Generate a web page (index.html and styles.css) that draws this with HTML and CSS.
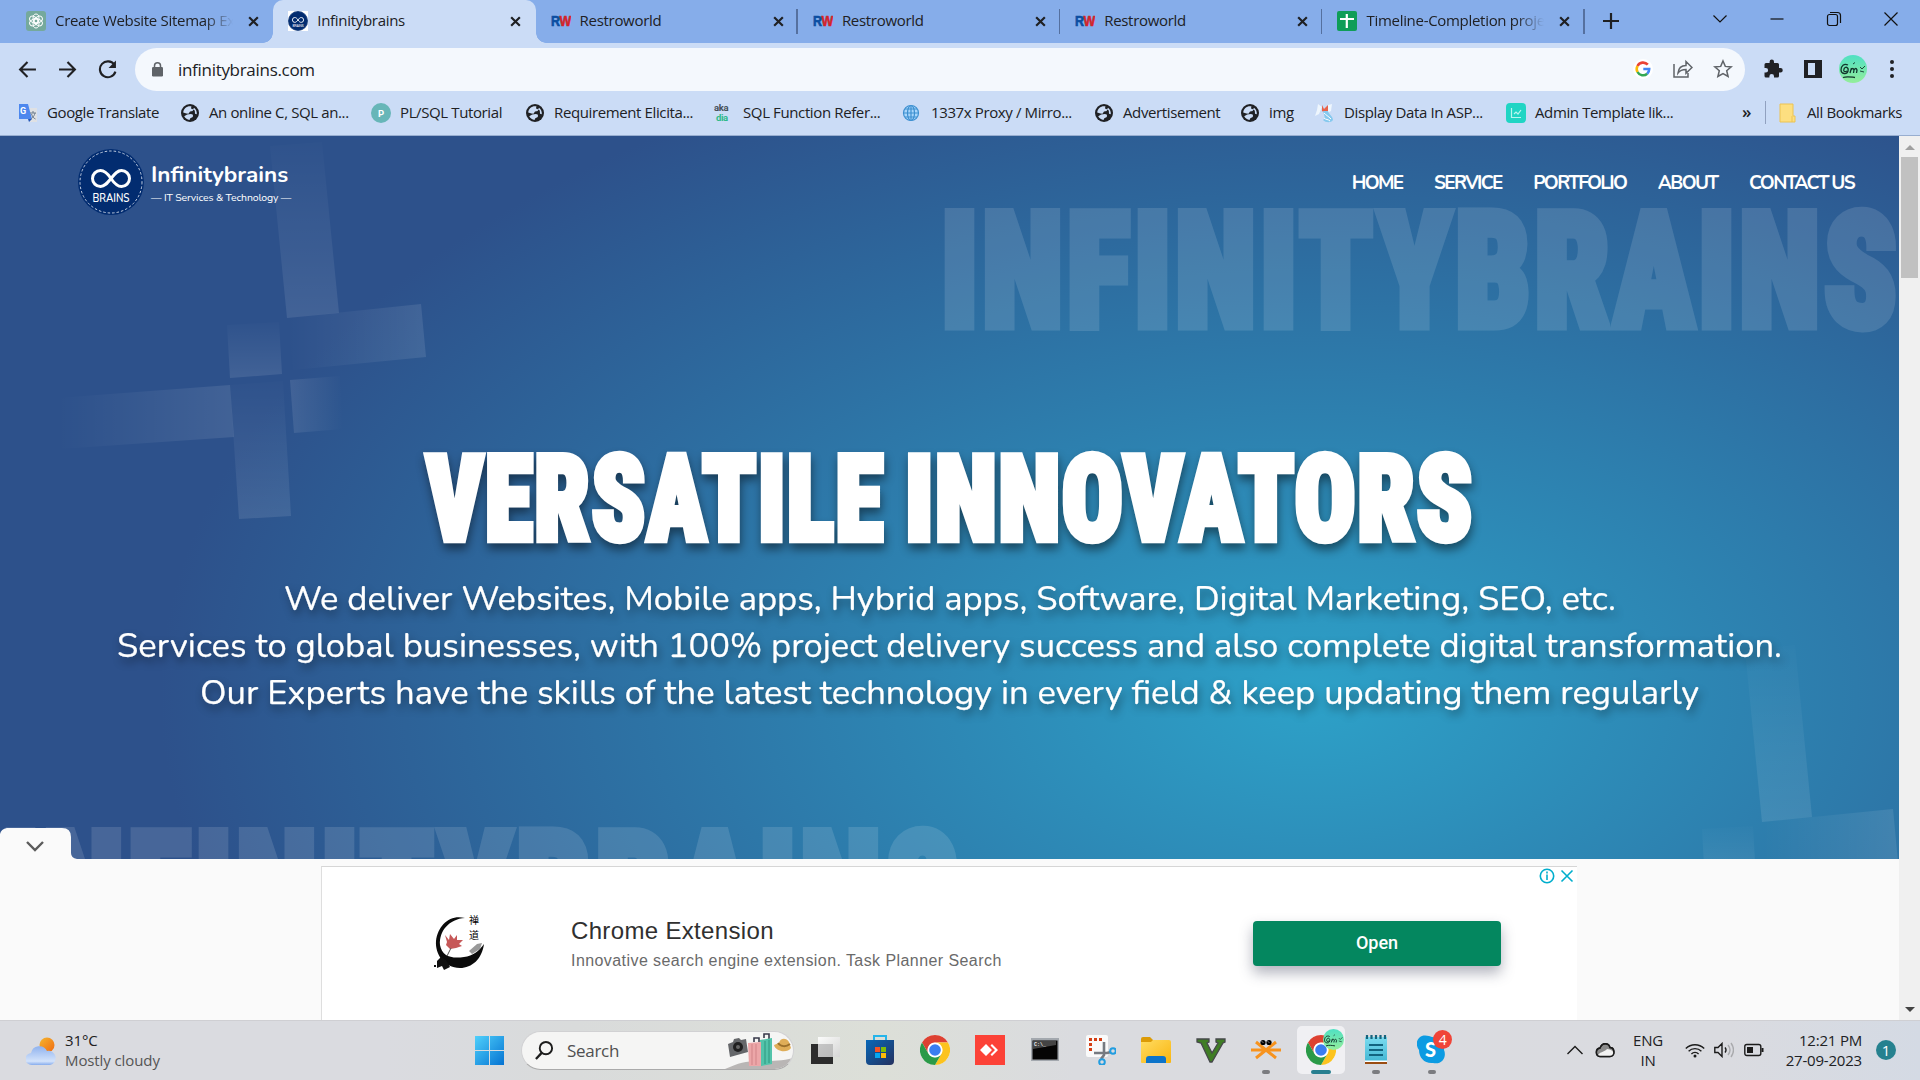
FILE: index.html
```html
<!DOCTYPE html>
<html lang="en">
<head>
<meta charset="utf-8">
<title>Infinitybrains</title>
<link rel="stylesheet" href="styles.css">
</head>
<body>
<svg width="0" height="0" class="defs" aria-hidden="true">
  <defs>
    <symbol id="close" viewBox="0 0 12 12"><path d="M2 2L10 10M10 2L2 10" stroke="#1f2023" stroke-width="2" fill="none"/></symbol>
    <symbol id="globe" viewBox="0 0 20 20"><circle cx="10" cy="10" r="9" fill="#202124"/><path d="M10 3.2c-3.600 0-6.500 2.600-6.800 6.300l3.300 1 2 .2 1.500-2.200 2.800-.4.200-1.800-2-.9.400-2.200zM4.200 13.200c1.200 2.200 3.200 3.500 5.300 3.700l.8-1.700 2.500-1.200.2-2.200-2-.7-3.800.4zM14 4.800l-1 1.800 1.800 1 .2 3.200 1.800.4c.2-2.700-.8-4.900-2.800-6.400z" fill="#cbdcf6"/></symbol>
    <symbol id="rw" viewBox="0 0 20 20"><text x="0" y="15" textLength="20" lengthAdjust="spacingAndGlyphs" font-family="Liberation Sans" font-weight="700" font-size="14" stroke-width=".6"><tspan fill="#0b4ea2" stroke="#0b4ea2">R</tspan><tspan fill="#d3232a" stroke="#d3232a">W</tspan></text></symbol>
    <symbol id="brand" viewBox="0 0 66 66"><circle cx="33" cy="33" r="33" fill="#022c70"/><circle cx="33" cy="33" r="31" fill="none" stroke="#c4cfe2" stroke-width="1" stroke-dasharray="2.500 2"/><path d="M33 29.500c-4-6-7-8-10.500-8a8 8 0 0 0 0 16c4 0 6.500-3 10.500-8s6.500-8 10.500-8a8 8 0 0 1 0 16c-3.500 0-6.500-2-10.500-8z" fill="none" stroke="#fff" stroke-width="3"/><text x="14.500" y="53" textLength="37" lengthAdjust="spacingAndGlyphs" font-family="Nunito, Lato" font-weight="600" font-size="11" fill="#fff">BRAINS</text></symbol>
    <symbol id="chrome" viewBox="0 0 30 30"><circle cx="15" cy="15" r="15" fill="#fff"/><path d="M15 0a15 15 0 0 1 13 7.500H15A7.500 7.500 0 0 0 8.500 18.750L2 7.500A15 15 0 0 1 15 0z" fill="#dd4132"/><path d="M28 7.500A15 15 0 0 1 15 30l6.500-11.250A7.500 7.500 0 0 0 15 7.500z" fill="#fcc31e"/><path d="M2 7.500A15 15 0 0 0 15 30l6.500-11.250a7.500 7.500 0 0 1-13 0z" fill="#2a9a48"/><circle cx="15" cy="15" r="7.200" fill="#fff"/><circle cx="15" cy="15" r="5.800" fill="#3a7df0"/></symbol>
    <symbol id="avatar" viewBox="0 0 28 28"><circle cx="14" cy="14" r="14" fill="url(#mint)"/><g fill="none" stroke="#12352c" stroke-width="1.300"><path d="M9 10c-4-2-7 1-7 5s6 5 7 1-3-5-4-2 1 3 3 2M11 18l1.500-5M12 15q2-3 3 0l-.5 3M15 15q2-3 3 0l-.5 3"/><path d="M4 22.500c4-1.500 8-.5 12 0" /><path d="M14 9l2-1.500M21 12l2 2 3-3M21 16l4 1" stroke-width=".9"/></g></symbol>
    <linearGradient id="mint" x2="0" y2="1"><stop stop-color="#4fe0c3"/><stop offset="1" stop-color="#94ee9b"/></linearGradient>
    <linearGradient id="up" x1="0" y1="1" x2="0" y2="0"><stop stop-color="#fff" stop-opacity=".1"/><stop offset="1" stop-color="#fff" stop-opacity="0"/></linearGradient>
    <linearGradient id="right"><stop stop-color="#fff" stop-opacity="0"/><stop offset="1" stop-color="#fff" stop-opacity=".1"/></linearGradient>
    <linearGradient id="down" x2="0" y2="1"><stop stop-color="#fff" stop-opacity=".01"/><stop offset="1" stop-color="#fff" stop-opacity=".1"/></linearGradient>
    <linearGradient id="left"><stop stop-color="#fff" stop-opacity=".1"/><stop offset="1" stop-color="#fff" stop-opacity="0"/></linearGradient>
    <linearGradient id="win" x2="1" y2="1"><stop stop-color="#4fd0fb"/><stop offset="1" stop-color="#0573d2"/></linearGradient>
    <linearGradient id="sun" x2="1" y2="1"><stop stop-color="#f5b62e"/><stop offset="1" stop-color="#ef6a13"/></linearGradient>
    <linearGradient id="cloud" x2="0" y2="1"><stop stop-color="#8fb2ee"/><stop offset=".8" stop-color="#d3e3fb"/><stop offset="1" stop-color="#86aced"/></linearGradient>
    <linearGradient id="fold" x2="1" y2="1"><stop stop-color="#ffdc62"/><stop offset="1" stop-color="#f9b50f"/></linearGradient>
    <linearGradient id="store" x2="1" y2="1"><stop stop-color="#0768b8"/><stop offset="1" stop-color="#25315f"/></linearGradient>
    <linearGradient id="glass" x2="1" y2="1"><stop stop-color="#fff"/><stop offset="1" stop-color="#d5d5d5"/></linearGradient>
    <linearGradient id="note" x2="0" y2="1"><stop stop-color="#7bdcf0"/><stop offset="1" stop-color="#3eb3d1"/></linearGradient>
  </defs>
</svg>

<header class="tabstrip">
  <div class="tabs">
    <div class="tab">
      <svg class="fav" viewBox="0 0 20 20"><rect width="20" height="20" rx="3" fill="#75a99c"/><g fill="none" stroke="#fff" stroke-width="1"><ellipse cx="10" cy="7.500" rx="3" ry="4.500"/><ellipse cx="10" cy="7.500" rx="3" ry="4.500" transform="rotate(60 10 10)"/><ellipse cx="10" cy="7.500" rx="3" ry="4.500" transform="rotate(120 10 10)"/><ellipse cx="10" cy="7.500" rx="3" ry="4.500" transform="rotate(180 10 10)"/><ellipse cx="10" cy="7.500" rx="3" ry="4.500" transform="rotate(240 10 10)"/><ellipse cx="10" cy="7.500" rx="3" ry="4.500" transform="rotate(300 10 10)"/></g></svg>
      <span class="title fade">Create Website Sitemap Ex</span><svg class="x"><use href="#close"/></svg>
    </div>
    <div class="tab active">
      <svg class="fav" viewBox="0 0 20 20"><rect width="20" height="20" fill="#fff"/><use href="#brand" width="20" height="20"/></svg>
      <span class="title">Infinitybrains</span><svg class="x"><use href="#close"/></svg>
    </div>
    <div class="tab div"><svg class="fav"><use href="#rw"/></svg><span class="title">Restroworld</span><svg class="x"><use href="#close"/></svg></div>
    <div class="tab div"><svg class="fav"><use href="#rw"/></svg><span class="title">Restroworld</span><svg class="x"><use href="#close"/></svg></div>
    <div class="tab div"><svg class="fav"><use href="#rw"/></svg><span class="title">Restroworld</span><svg class="x"><use href="#close"/></svg></div>
    <div class="tab div">
      <svg class="fav" viewBox="0 0 20 20"><rect width="20" height="20" rx="2" fill="#0f9d58"/><path d="M9.800 3v14M3 8h14" stroke="#fff" stroke-width="2.200"/></svg>
      <span class="title fade">Timeline-Completion proje</span><svg class="x"><use href="#close"/></svg>
    </div>
  </div>
  <svg class="plus" viewBox="0 0 16 16"><path d="M8 0v16M0 8h16" stroke="#1f2023" stroke-width="2.200"/></svg>
  <div class="controls">
    <svg viewBox="0 0 16 16"><path d="M1.500 4.500L8 11l6.500-6.500" /></svg>
    <svg viewBox="0 0 16 16"><path d="M1.500 8h13"/></svg>
    <svg viewBox="0 0 16 16"><rect x="1.500" y="3.500" width="10" height="11" rx="2"/><path d="M4 1.500h7.500a3 3 0 0 1 3 3V12"/></svg>
    <svg viewBox="0 0 16 16"><path d="M1.500 1.500l13 13M14.500 1.500l-13 13"/></svg>
  </div>
</header>

<div class="toolbar">
  <svg class="nav-i" viewBox="0 0 18 18"><path d="M17 9H2M9 2L2 9l7 7"/></svg>
  <svg class="nav-i" viewBox="0 0 18 18"><path d="M1 9h15M9 2l7 7-7 7"/></svg>
  <svg class="nav-i" viewBox="0 0 18 18"><path d="M15.500 4.500A7.500 7.500 0 1 0 16.500 11"/><path d="M17 .5V7.500H10z" fill="#202124" stroke="none"/></svg>
  <div class="omnibox">
    <svg class="lock" viewBox="0 0 11 15"><rect y="5" width="11" height="9.500" rx="1.200" fill="#5f6368"/><path d="M2.500 6V3.800a3 3 0 0 1 6 0V6" fill="none" stroke="#5f6368" stroke-width="1.500"/></svg>
    <span class="url">infinitybrains.com</span>
    <svg class="oi" viewBox="0 0 20 20"><circle cx="10" cy="10" r="10" fill="#fff"/><g fill="none" stroke-width="2.600"><path d="M14.800 5.700A6.300 6.300 0 0 0 4.500 7" stroke="#ea4335"/><path d="M4.500 7a6.300 6.300 0 0 0 0 6" stroke="#fbbc05"/><path d="M4.500 13a6.300 6.300 0 0 0 9.700 1.700" stroke="#34a853"/><path d="M14.200 14.700A6.200 6.200 0 0 0 16.200 10H10.300" stroke="#4285f4"/></g></svg>
    <svg class="oi line" viewBox="0 0 20 20"><path d="M1 5v13h14v-4M5 14c.5-5 3-7.500 8-7.500V2.500l6 6-6 5.800v-3.800c-3.500 0-6 .8-8 3.500z"/></svg>
    <svg class="oi line" viewBox="0 0 20 20"><path d="M10 2l2.300 5.400 5.900.5-4.500 3.900 1.400 5.700L10 14.500l-5.100 3 1.400-5.700L1.800 7.900l5.900-.5z"/></svg>
  </div>
  <svg class="ext" viewBox="0 0 20 20"><path d="M17.500 9H16V5.500A1.500 1.500 0 0 0 14.500 4H11V2.700a2.200 2.200 0 0 0-4.400 0V4H3a1.500 1.500 0 0 0-1.500 1.500V9h1.300a2.300 2.300 0 0 1 0 4.600H1.500v3.500A1.500 1.500 0 0 0 3 18.600h3.400v-1.300a2.300 2.300 0 0 1 4.600 0v1.300h3.500a1.500 1.500 0 0 0 1.500-1.500v-3.600h1.500a2.200 2.200 0 0 0 0-4.500z" fill="#202124"/></svg>
  <svg class="ext" viewBox="0 0 20 20"><path d="M1 1h18v18H1z" fill="#202124"/><path d="M5 4h7v12H5z" fill="#cbdcf6"/></svg>
  <svg class="avatar"><use href="#avatar"/></svg>
  <svg class="ext" viewBox="0 0 20 20"><g fill="#202124"><circle cx="10" cy="3" r="2"/><circle cx="10" cy="10" r="2"/><circle cx="10" cy="17" r="2"/></g></svg>
</div>

<nav class="bookmarks">
  <a><svg viewBox="0 0 20 20"><path d="M8 5h11v14H12z" fill="#dfe1e4"/><path d="M1 1h9l4 15H1z" fill="#4c87ee"/><path d="M10 16h4l-3 3z" fill="#2457b8"/><text x="2" y="11" font-family="Roboto" font-weight="700" font-size="9" fill="#fff">G</text><path d="M12 10h6M15 8v2M17 10c-1 4-3 5-4 6M13.500 11c1 3 2 4 4 5" stroke="#6d7c8c" fill="none"/></svg>Google Translate</a>
  <a><svg><use href="#globe"/></svg>An online C, SQL an...</a>
  <a><svg viewBox="0 0 20 20"><circle cx="10" cy="10" r="10" fill="#67b6b8"/><text x="7" y="13.500" font-family="Roboto" font-weight="700" font-size="9.500" fill="#fff">P</text></svg>PL/SQL Tutorial</a>
  <a><svg><use href="#globe"/></svg>Requirement Elicita...</a>
  <a><svg viewBox="0 0 20 20"><text x="0" y="8" font-family="Roboto" font-weight="700" font-size="9.500" fill="#46505a">aka</text><text x="2" y="18" font-family="Roboto" font-weight="700" font-size="9.500" fill="#2cb989">dia</text></svg>SQL Function Refer...</a>
  <a><svg viewBox="0 0 20 20"><g fill="#a9d6fb" stroke="#3d8fd0" stroke-width="1.200"><circle cx="9" cy="10" r="7.500"/><ellipse cx="9" cy="10" rx="3.500" ry="7.500"/><path d="M9 2.500v15M1.500 10h15M3 6h12M3 14h12"/></g></svg>1337x Proxy / Mirro...</a>
  <a><svg><use href="#globe"/></svg>Advertisement</a>
  <a><svg><use href="#globe"/></svg>img</a>
  <a><svg viewBox="0 0 20 20"><path d="M3 1l4 3-3 7-4 2 2-6zM13 2l4-1-1 7-4 2z" fill="#eef6fd"/><path d="M7 2l2 4 4-4v6l-3 2-3-2z" fill="#e8624a"/><path d="M8 8h5c1 4 5 5 5 9-2 3-7 3-10 0 3-2 1-5 0-9z" fill="#86c9ee"/><path d="M9 10c2 2 4 3 7 6M9 15c2 2 4 1 6 3" stroke="#fff" fill="none"/></svg>Display Data In ASP...</a>
  <a><svg viewBox="0 0 20 20"><rect width="20" height="20" rx="4" fill="#20d5c4"/><path d="M5.500 5v9.500H15M8 11l2-2 2 2 3-4" stroke="#b9f6ef" stroke-width="1.200" fill="none"/></svg>Admin Template lik...</a>
  <b>»</b>
  <a class="all"><svg viewBox="0 0 20 20"><path d="M2 1h13v12h2v6H2z" fill="#fddf80" stroke="#ecc352"/><path d="M14 13v6" stroke="#ecc352"/></svg>All Bookmarks</a>
</nav>

<main class="viewport">
  <div class="page">
    <section class="hero">
      <svg class="art" viewBox="0 136 1899 723">
        <g fill="url(#down)">
          <path d="M270 146L322 142L339 313L287 318z"/>
          <path d="M227 325L279 322L282 374L230 378z"/>
          <path d="M230 385L283 381L291 516L239 519z"/>
          <path d="M1745 650L1795 645L1812 817L1762 822z"/>
          <path d="M1702 829L1753 826L1756 880L1705 884z"/>
        </g>
        <g fill="url(#right)">
          <path d="M287 318L421 304L426 357L293 370z"/>
          <path d="M57 398L230 385L234 437L60 449z"/>
          <path d="M1762 822L1893 809L1898 862L1766 876z"/>
        </g>
        <path d="M290 380L340 376L343 429L294 433z" fill="url(#left)"/>
        <g class="mark">
          <text x="941" y="326" textLength="960" lengthAdjust="spacingAndGlyphs">INFINITYBRAINS</text>
          <text x="2" y="945" textLength="960" lengthAdjust="spacingAndGlyphs">INFINITYBRAINS</text>
        </g>
      </svg>
      <div class="bar">
        <div class="logo">
          <svg class="badge"><use href="#brand"/></svg>
          <div class="words"><strong>Infinitybrains</strong><small>— IT Services &amp; Technology —</small></div>
        </div>
        <div class="menu"><a>HOME</a><a>SERVICE</a><a>PORTFOLIO</a><a>ABOUT</a><a>CONTACT US</a></div>
      </div>
      <svg class="copy" viewBox="0 430 1899 300">
        <g class="big">
          <text x="426" y="540" textLength="459" lengthAdjust="spacingAndGlyphs">VERSATILE</text>
          <text x="905" y="540" textLength="569" lengthAdjust="spacingAndGlyphs">INNOVATORS</text>
        </g>
        <g class="para">
          <text x="284" y="610" textLength="1332" lengthAdjust="spacingAndGlyphs">We deliver Websites, Mobile apps, Hybrid apps, Software, Digital Marketing, SEO, etc.</text>
          <text x="117" y="657" textLength="1665" lengthAdjust="spacingAndGlyphs">Services to global businesses, with 100% project delivery success and also complete digital transformation.</text>
          <text x="200" y="704" textLength="1499" lengthAdjust="spacingAndGlyphs">Our Experts have the skills of the latest technology in every field &amp; keep updating them regularly</text>
        </g>
      </svg>
      <svg class="toggle" viewBox="0 0 77 31"><path d="M0 31V6Q1 1 7 0H62Q71 0 71 9V25Q71 30 77 31z" fill="#fafafa"/><path d="M27 14l8 8 8-8" fill="none" stroke="#5b5b5b" stroke-width="2.400"/></svg>
    </section>
    <section class="adwrap">
      <div class="ad">
        <svg class="zen" viewBox="0 0 52 58"><path d="M32 5C17 1 5 12 3 28c-1 13 8 27 24 27 12 0 22-9 24-24-5 7-11 12-20 13-13 2-22-1-24-12C6 18 16 6 32 5z" fill="#0b0b0b"/><path d="M4 48l4-4 5 3 4 7-6 3-2-4-5 2zM1 52h2v2H1z" fill="#111"/><path d="M36 38l8-7 5-1-2 6-8 5z" fill="#999"/><path d="M12 22l4 5 1-6 4 5 3-4 0 5 6 0-4 4 3 2-6 2-6 1-4-4 1-3z" fill="#c65858"/><path d="M18 35l-4 8" stroke="#555"/><text x="36" y="11" font-family="Noto Sans CJK SC" font-size="10">禅</text><text x="36" y="26" font-family="Noto Sans CJK SC" font-size="10">道</text></svg>
        <div class="adtext"><h2>Chrome Extension</h2><p>Innovative search engine extension. Task Planner Search</p></div>
        <a class="open">Open</a>
        <svg class="choices" viewBox="0 0 36 16"><g fill="none" stroke="#00aecd" stroke-width="1.600"><circle cx="8" cy="8" r="6.700"/><path d="M8 6.500v5.500M8 3.500v2M22.500 2.500l11 11M33.500 2.500l-11 11"/></g></svg>
      </div>
    </section>
  </div>
  <div class="scroll"><i class="up"></i><div class="thumb"></div><i class="down"></i></div>
</main>

<footer class="taskbar">
  <div class="weather">
    <svg viewBox="0 0 30 30"><circle cx="21" cy="8" r="7.500" fill="url(#sun)"/><path d="M6 28a6 6 0 0 1-1-12 8.500 8.500 0 0 1 16-2A7 7 0 0 1 24 28z" fill="url(#cloud)"/></svg>
    <div><b>31°C</b><span>Mostly cloudy</span></div>
  </div>
  <svg class="winlogo" viewBox="0 0 29 29"><path d="M0 0h14v14H0zM15 0h14v14H15zM0 15h14v14H0zM15 15h14v14H15z" fill="url(#win)"/></svg>
  <div class="search">
    <svg class="glass" viewBox="0 0 20 20"><circle cx="11.500" cy="7.500" r="6.500" fill="none" stroke="#1d1d1d" stroke-width="2"/><path d="M7 12.500L1 19" stroke="#1d1d1d" stroke-width="2.400"/></svg>
    <span>Search</span>
    <svg class="trip" viewBox="0 0 68 36"><path d="M0 36c14-6 20-8 34-8s22 0 34-3c-1 6-5 11-14 11z" fill="#b9b6b5"/><path d="M3 11l5-2 1-3 5-1 2 2 5-1 2 13-18 5z" fill="#65676a"/><circle cx="13" cy="14" r="5" fill="#202020"/><circle cx="13" cy="14" r="2" fill="#666"/><path d="M29 9V5h5v4M39 5V1h5v5" fill="none" stroke="#38394a" stroke-width="1.600"/><path d="M35 7l12-2v26l-11 2z" fill="#52c3aa"/><path d="M23 10l13-1v24l-12 0z" fill="#eca6a8"/><path d="M27 11v21M31 11v21" stroke="#d18488"/><path d="M40 8v23M44 7v23" stroke="#2e967f"/><path d="M49 12c1 6 13 9 17 3l-2-6c-3-5-9-4-10 1z" fill="#dfad58"/><path d="M53 10c3 4 8 4 12 1" stroke="#9c702b" stroke-width="2" fill="none"/></svg>
  </div>
  <div class="apps">
    <a><svg viewBox="0 0 30 30"><path d="M1 9h22v20H1z" fill="#2c2c2c"/><path d="M8 2h22v20H8z" fill="url(#glass)" opacity=".9"/><path d="M8 9h15v13H8z" fill="#aaa" opacity=".5"/></svg></a>
    <a><svg viewBox="0 0 30 30"><path d="M9 6V1h12v5" fill="none" stroke="#25b5ea" stroke-width="2"/><path d="M1 5h28v21a4 4 0 0 1-4 4H5a4 4 0 0 1-4-4z" fill="url(#store)"/><path d="M10 12h5v5h-5z" fill="#f35325"/><path d="M16 12h5v5h-5z" fill="#81bc06"/><path d="M10 18h5v5h-5z" fill="#05a6f0"/><path d="M16 18h5v5h-5z" fill="#ffba08"/></svg></a>
    <a><svg><use href="#chrome"/></svg></a>
    <a><svg viewBox="0 0 30 30"><path d="M0 0h30v30H0z" fill="#fc4237"/><path d="M11 9l6 6-6 6-6-6zM15.500 10.500L17 9l6 6-6 6-1.500-1.500L20 15z" fill="#fff"/></svg></a>
    <a><svg viewBox="0 0 30 30"><path d="M1 3h28v23H1z" fill="#a3a8ae"/><path d="M2.500 5.500h25V24.500h-25z" fill="#050505"/><path d="M3 6h23v4L3 14z" fill="#444"/><text x="4" y="11" font-family="Liberation Mono" font-weight="700" font-size="5" fill="#eee">C:\_</text></svg></a>
    <a><svg viewBox="0 0 30 30"><rect width="22" height="22" rx="2" fill="#fafafa"/><path d="M16 4.500H4.500V16" fill="none" stroke="#d43e14" stroke-width="3" stroke-dasharray="3 2"/><path d="M18 7v13l-3 4M8 18h13l4-1" stroke="#767a80" stroke-width="2.600" fill="none"/><g fill="none" stroke="#229de0" stroke-width="2"><circle cx="27" cy="16" r="2.800"/><circle cx="16" cy="27" r="2.800"/></g></svg></a>
    <a><svg viewBox="0 0 30 30"><path d="M0 4q0-2 2-2h7l3 3v6H0z" fill="#dc9b07"/><path d="M0 7h10l2-2h16q2 0 2 2v20q0 1-1 1H1q-1 0-1-1z" fill="url(#fold)"/><path d="M5 28v-4q0-3 3-3h14q3 0 3 3v4z" fill="#0c74ca"/></svg></a>
    <a><svg viewBox="0 0 30 30"><path d="M1 4h12v3l-2 1 5 10 6-10-2-1V4h9v3l-2 1-11 19h-2L5 8 1 7z" fill="#3f7d24" stroke="#45484a" stroke-width="1.300"/></svg></a>
    <a class="run"><svg viewBox="0 0 30 30"><path d="M0 15h30M5 7l10 8 10-8M5 23l10-8 10 8" fill="none" stroke="#f7931e" stroke-width="3"/><circle cx="12" cy="7.500" r="2.600"/><circle cx="18" cy="7.500" r="2.600"/><path d="M11 6.500l1 1M17 6.500l1 1" stroke="#fff"/></svg></a>
    <a class="run on"><svg><use href="#chrome"/></svg><svg class="mini"><use href="#avatar" width="21" height="21"/></svg></a>
    <a class="run"><svg viewBox="0 0 30 30"><path d="M4 2h22v27H4z" fill="url(#note)"/><path d="M4 27h22v2H4z" fill="#9a4d12"/><path d="M4 25.500h22V27H4z" fill="#fff"/><path d="M8 10h14M8 15h14M8 20h14" stroke="#126480" stroke-width="1.800"/><path d="M6 0v4M10.500 0v4M15 0v4M19.500 0v4M24 0v4" stroke="#16637c" stroke-width="2.200"/></svg></a>
    <a class="run"><svg viewBox="0 0 30 30"><path d="M2 3C6-1 12 1 15 2c8 0 13 6 12 13 3 7-2 15-11 13C8 29 2 23 2 15-1 11-1 6 2 3z" fill="#0c9be2"/><text x="8" y="22" font-family="Lato" font-weight="900" font-size="20" fill="#fff">S</text></svg><em>4</em></a>
  </div>
  <div class="tray">
    <svg class="t-up" viewBox="0 0 16 16"><path d="M.5 12L8 4.500l7.500 7.500"/></svg>
    <svg class="t-cl" viewBox="0 0 20 16"><path d="M5 14.500a4.300 4.300 0 0 1 0-8.500C7 .5 13.500.5 15 5.500c5 0 5.500 9 0 9z" fill="#8b8b8b"/><path d="M3 14c0-4 7-4 9-7 4 0 7 3 7 5l-3 2.500z" fill="#f2f2f2" stroke="none"/><path d="M5 14.500a4.300 4.300 0 0 1 0-8.500C7 .5 13.500.5 15 5.500c5 0 5.500 9 0 9z"/></svg>
    <div class="lang">ENG<br>IN</div>
    <svg class="t-wi" viewBox="0 0 20 16"><path d="M.8 6.500a13 13 0 0 1 18.400 0M3.600 9.300a9 9 0 0 1 12.800 0M6.400 12a5.200 5.200 0 0 1 7.200 0"/><circle cx="10" cy="14" r="1.500" fill="#1b1b1b" stroke="none"/></svg>
    <svg class="t-vo" viewBox="0 0 20 16"><path d="M.8 5.500H4L8 1.500v13l-4-4H.8zM11 5.500q2 2.500 0 5"/><path d="M14 3q4 5 0 10M17 1q5 7 0 14" stroke="#a9aaad"/></svg>
    <svg class="t-ba" viewBox="0 0 20 16"><rect x=".8" y="2.500" width="16" height="11" rx="2"/><path d="M3 5h6v6H3zM17.500 6h2v4h-2z" fill="#1b1b1b" stroke="none"/></svg>
    <div class="clock">12:21 PM<br>27-09-2023</div>
    <span class="count">1</span>
  </div>
</footer>
</body>
</html>
```
FILE: styles.css
```css
* { box-sizing: border-box; }
body { margin: 0; width: 1920px; height: 1080px; overflow: hidden; display: flex; flex-direction: column; font-family: "Open Sans", "Noto Sans", sans-serif; font-stretch: 89%; color: #202124; }
svg { display: block; flex: none; }
.defs { position: absolute; }

.tabstrip { height: 43px; background: #86adea; display: flex; align-items: stretch; padding-left: 11px; flex: none; }
.tabs { display: grid; grid-template-columns: repeat(6, 262.300px); }
.tab { position: relative; display: flex; align-items: center; padding: 0 0 1px 15px; font-size: 15px; white-space: nowrap; letter-spacing: -.3px; }
.fav { width: 20px; height: 20px; margin-right: 9px; }
.title { width: 192px; padding-bottom: 2px; }
.fade { width: 178px; margin-right: 14px; -webkit-mask-image: linear-gradient(90deg, #000 84%, transparent); mask-image: linear-gradient(90deg, #000 84%, transparent); }
.x { width: 13px; height: 13px; }
.active { background: #cbdcf6; border-radius: 10px 10px 0 0; }
.active::before, .active::after { content: ""; position: absolute; bottom: 0; width: 10px; height: 10px; }
.active::before { left: -10px; background: radial-gradient(circle at 0 0, transparent 9.500px, #cbdcf6 10px); }
.active::after { right: -10px; background: radial-gradient(circle at 100% 0, transparent 9.500px, #cbdcf6 10px); }
.div::after { content: ""; position: absolute; right: 0; top: 9px; width: 1.500px; height: 25px; background: #55709f; }
.plus { width: 16px; height: 16px; margin: 13px 0 0 18px; }
.controls { display: flex; gap: 41px; margin: 11px 0 0 93px; }
.controls svg { width: 16px; height: 16px; fill: none; stroke: #111; stroke-width: 1.200; }

.toolbar { height: 53px; background: #cbdcf6; display: flex; align-items: center; padding: 0 0 1px 18px; flex: none; }
.nav-i { width: 19px; height: 19px; margin-right: 21px; fill: none; stroke: #202124; stroke-width: 2; }
.omnibox { width: 1610px; height: 43px; border-radius: 22px; background: #f4f8fd; margin-left: -3px; display: flex; align-items: center; padding: 0 12px 0 17px; }
.lock { width: 11px; height: 15px; }
.url { margin-left: 15px; font-size: 17px; letter-spacing: -.3px; flex: 1; }
.oi { width: 20px; height: 20px; margin-left: 20px; }
.line { fill: none; stroke: #5f6368; stroke-width: 1.500; }
.ext { width: 20px; height: 20px; margin-left: 18px; }
.ext + .ext { margin-left: 20px; }
.avatar { width: 28px; height: 28px; margin-left: 16px; }
.avatar + .ext { margin-left: 15px; }

.bookmarks { height: 40px; background: #cbdcf6; border-bottom: 1px solid #98aed0; padding: 0 16px 6px 18px; display: grid; grid-template-columns: 162px 191px 154px 189px 188px 192px 146px 75px 191px 236px 23px 1fr; align-items: center; font-size: 15px; letter-spacing: -.38px; flex: none; white-space: nowrap; }
.bookmarks a { display: flex; align-items: center; gap: 9px; line-height: 19px; padding-bottom: 1px; }
.bookmarks svg { width: 20px; height: 20px; margin-top: 2px; }
.bookmarks b { font-size: 17px; font-weight: 600; line-height: 20px; padding-bottom: 2px; }
.all { border-left: 1px solid #91a1bf; padding-left: 12px; }

.viewport { height: 884px; display: flex; flex: none; }
.page { width: 1899px; display: flex; flex-direction: column; }
.hero { position: relative; height: 723px; overflow: hidden; flex: none; background: radial-gradient(1150px 680px at 1310px 560px, #2da1c8, #2d518b); }
.art { position: absolute; left: 0; top: 0; width: 1899px; height: 723px; }
.mark { opacity: .12; fill: #fff; stroke: #fff; stroke-width: 9px; font: 900 159px Roboto, sans-serif; font-stretch: 75%; letter-spacing: 5px; }
.bar { position: relative; display: flex; justify-content: space-between; height: 92px; padding: 13px 45px 0 78px; }
.logo { display: flex; gap: 7px; color: #fff; }
.badge { width: 66px; height: 66px; }
.words { padding-top: 12px; display: flex; flex-direction: column; }
.words strong { font: 700 22.500px/28px Nunito, sans-serif; }
.words small { font: 10.500px/17px Nunito, sans-serif; letter-spacing: -.15px; white-space: nowrap; }
.menu { display: flex; gap: 31.500px; padding-top: 20px; font: 700 19px/28px Nunito, sans-serif; letter-spacing: -1.650px; color: #fff; }
.copy { position: relative; width: 1899px; height: 300px; margin-top: 202px; fill: #fff; }
.big { font: 900 119px Roboto, sans-serif; font-stretch: 75%; letter-spacing: 2px; stroke: #fff; stroke-width: 6.500px; filter: drop-shadow(1px 6px 5px rgba(0,0,0,.45)); }
.para { font: 400 35px Nunito, Lato, sans-serif; stroke: #fff; stroke-width: .25px; filter: drop-shadow(2px 5px 4px rgba(0,0,0,.4)); }
.toggle { position: absolute; left: 0; bottom: 0; width: 77px; height: 31px; }
.adwrap { flex: 1; background: #fafafa; padding-top: 7px; }
.ad { position: relative; height: 100%; margin-left: 321px; width: 1256px; background: #fff; border-left: 1px solid #dedede; border-top: 1px solid #d6d6d6; display: flex; padding-left: 111px; }
.zen { width: 52px; height: 58px; margin-top: 46px; }
.adtext { margin-left: 86px; padding-top: 49px; width: 682px; font-family: "Liberation Sans", Arial, sans-serif; font-stretch: 100%; }
.adtext h2 { margin: 0; font-size: 24px; line-height: 30px; font-weight: 400; letter-spacing: .34px; color: #303030; }
.adtext p { margin: 4px 0 0; font-size: 16px; line-height: 22px; letter-spacing: .43px; color: #6a6a6a; }
.open { width: 248px; height: 45px; margin-top: 54px; border-radius: 4px; background: #04875f; color: #fff; font: 500 18px/43px Roboto, sans-serif; text-align: center; box-shadow: 0 7px 14px rgba(60,64,90,.4); }
.choices { position: absolute; right: 2px; top: 1px; width: 36px; height: 16px; }
.scroll { width: 21px; background: #f0f0f0; display: flex; flex-direction: column; align-items: center; padding: 9px 0 8px; }
.scroll i { border: 5px solid transparent; }
.scroll .up { border-bottom-color: #a0a0a0; border-top: 0; }
.scroll .down { border-top-color: #444; border-bottom: 0; margin-top: auto; }
.thumb { width: 17px; height: 121px; background: #c1c1c1; margin-top: 7px; }

.taskbar { height: 60px; flex: none; display: flex; background: linear-gradient(90deg, #dadbe0 20%, #d9dbdb 30%, #dcdfd8 46%, #dadbdf 56%, #dadbe0 90%, #d4dae4); box-shadow: inset 0 1px #cfcfd3; }
.weather { width: 475px; display: flex; padding: 10px 0 0 26px; gap: 9px; }
.weather svg { width: 30px; height: 30px; margin-top: 7px; }
.weather b, .weather span { display: block; font-weight: 400; font-size: 15px; line-height: 20px; letter-spacing: -.1px; color: #555; }
.weather b { color: #202020; }
.winlogo { width: 29px; height: 29px; margin-top: 16px; }
.search { width: 273px; height: 39px; margin: 11px 0 0 17px; border-radius: 20px; background: #f5f5f4; border: 1px solid #d1d1d3; border-bottom-color: #aaa; display: flex; align-items: center; padding-left: 13px; overflow: hidden; }
.glass { width: 19px; height: 19px; }
.search span { margin-left: 13px; font-size: 17px; color: #505050; width: 139px; letter-spacing: -.3px; }
.trip { width: 68px; height: 36px; margin-left: 19px; }
.apps { display: grid; grid-template-columns: repeat(12, 55.200px); margin-left: 3px; }
.apps a { position: relative; display: flex; align-items: center; justify-content: center; }
.apps svg { width: 30px; height: 30px; }
.run::after { content: ""; position: absolute; bottom: 6px; left: calc(50% - 4px); width: 8px; height: 4px; border-radius: 2px; background: #7b7c80; }
.on::before { content: ""; position: absolute; width: 48px; height: 48px; top: 6px; left: 3.600px; border-radius: 5px; background: #f0f0f3; }
.on svg { position: relative; }
.on::after { width: 20px; left: calc(50% - 10px); background: #287f90; }
.apps .mini { position: absolute; right: 5px; top: 9px; width: 21px; height: 21px; }
.apps em { position: absolute; right: 7px; top: 10px; width: 19px; height: 19px; border-radius: 50%; background: #f04438; color: #fff; font: 14px/19px "Open Sans", sans-serif; text-align: center; }
.tray { display: grid; grid-template-columns: 28px 32px 58px 29px 30px 30px 88px 34px; align-items: center; margin-left: auto; margin-right: 24px; padding-bottom: 1px; font-size: 15px; line-height: 20px; letter-spacing: -.2px; }
.tray svg { fill: none; stroke: #1b1b1b; stroke-width: 1.400; width: 20px; height: 16px; }
.tray .t-up { width: 16px; }
.lang { text-align: center; width: 42px; }
.clock { text-align: right; white-space: nowrap; }
.count { width: 20px; height: 20px; border-radius: 50%; background: #26818f; color: #fff; text-align: center; justify-self: end; }
```
